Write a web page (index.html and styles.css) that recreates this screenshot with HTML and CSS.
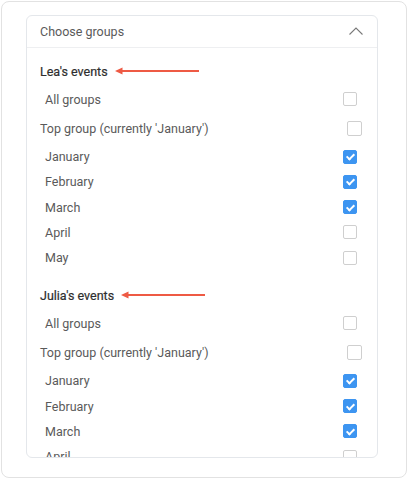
FILE: index.html
```html
<!DOCTYPE html>
<html>
<head>
<meta charset="utf-8">
<link rel="stylesheet" href="styles.css">
</head>
<body>
<div class="card">
  <div class="panel">
    <div class="panel-header">
      <span class="title">Choose groups</span>
      <svg class="chevron" width="14" height="8" viewBox="0 0 14 8"><path d="M0.5 7.5 L7 1 L13.5 7.5" fill="none" stroke="#7a7a7a" stroke-width="1.1"/></svg>
    </div>
    <div class="panel-body">
      <div class="section">
        <div class="heading"><span>Lea's events</span><svg class="arrow" width="84" height="8" viewBox="0 0 84 8"><path d="M0 4 L7.5 0.5 L7.5 7.5 Z" fill="#ee5a44"/><rect x="7" y="3" width="77" height="2" fill="#ee5a44"/></svg></div>
        <div class="row all"><span>All groups</span><i class="cb"></i></div>
        <div class="row top"><span>Top group (currently 'January')</span><i class="cb"></i></div>
        <div class="months">
          <div class="row month"><span>January</span><i class="cb on"></i></div>
          <div class="row month"><span>February</span><i class="cb on"></i></div>
          <div class="row month"><span>March</span><i class="cb on"></i></div>
          <div class="row month"><span>April</span><i class="cb"></i></div>
          <div class="row month"><span>May</span><i class="cb"></i></div>
        </div>
      </div>
      <div class="section">
        <div class="heading"><span>Julia's events</span><svg class="arrow" width="84" height="8" viewBox="0 0 84 8"><path d="M0 4 L7.5 0.5 L7.5 7.5 Z" fill="#ee5a44"/><rect x="7" y="3" width="77" height="2" fill="#ee5a44"/></svg></div>
        <div class="row all"><span>All groups</span><i class="cb"></i></div>
        <div class="row top"><span>Top group (currently 'January')</span><i class="cb"></i></div>
        <div class="months">
          <div class="row month"><span>January</span><i class="cb on"></i></div>
          <div class="row month"><span>February</span><i class="cb on"></i></div>
          <div class="row month"><span>March</span><i class="cb on"></i></div>
          <div class="row month"><span>April</span><i class="cb"></i></div>
        </div>
      </div>
    </div>
  </div>
</div>
</body>
</html>
```

FILE: styles.css
```css
* { box-sizing: border-box; }
html, body { margin: 0; padding: 0; background: #ffffff; }
body {
  font-family: Roboto, "Liberation Sans", Arial, sans-serif;
  font-size: 12.5px;
  color: #5a5a5a;
}
.card {
  margin: 1px 0 0 1px;
  width: 406px;
  height: 477px;
  border: 1px solid #e2e2e2;
  border-radius: 8px;
  padding: 13px 0 0 24px;
  background: #fff;
}
.panel {
  width: 352px;
  height: 443px;
  border: 1px solid #e4e7eb;
  border-radius: 6px;
  overflow: hidden;
  display: flex;
  flex-direction: column;
}
.panel-header {
  flex: none;
  height: 32px;
  border-bottom: 1px solid #eeeff1;
  display: flex;
  align-items: center;
  justify-content: space-between;
  padding: 0 14px 0 13px;
}
.title { font-size: 12.5px; color: #5a5a5a; line-height: 16px; }
.chevron { display: block; margin-top: -1px; }
.panel-body {
  flex: 1;
  overflow: hidden;
  padding: 13px 15px 0 13px;
}
.section + .section { margin-top: 15px; }
.heading {
  height: 20px;
  display: flex;
  align-items: center;
  font-weight: 400;
  color: #2e2e2e;
  -webkit-text-stroke: 0.2px #2e2e2e;
  margin-bottom: 4px;
}
.heading .arrow { display: block; margin-left: 7px; }
.row {
  display: flex;
  align-items: center;
  justify-content: space-between;
}
.row.all { height: 28px; padding: 0 5px; }
.row.top { height: 30px; }
.row.top .cb { width: 15px; height: 15px; }
.months { padding-top: 1px; }
.row.month { height: 25.25px; padding: 0 5px; }
.cb {
  display: block;
  width: 14px;
  height: 14px;
  border: 1px solid #cfcfcf;
  border-radius: 2px;
  background: #fff;
  position: relative;
}
.cb.on {
  background: #3d95f1;
  border-color: #3d95f1;
}
.cb.on::after {
  content: "";
  position: absolute;
  left: 3.5px;
  top: 1.5px;
  width: 3px;
  height: 6px;
  border: solid #fff;
  border-width: 0 2px 2px 0;
  transform: rotate(45deg);
}
```
